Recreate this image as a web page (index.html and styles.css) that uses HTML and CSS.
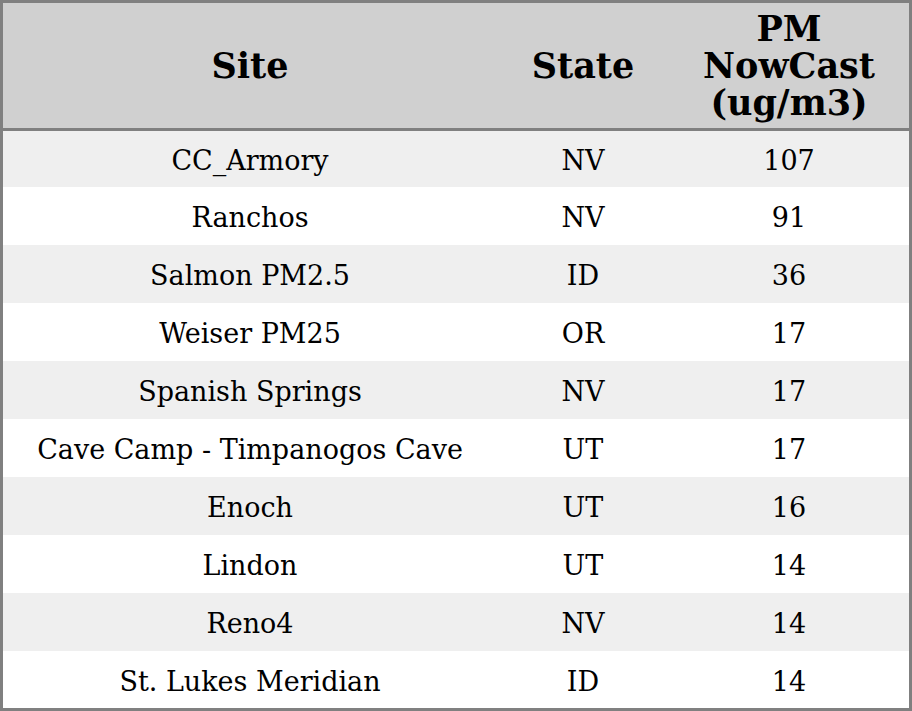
FILE: index.html
```html
<!DOCTYPE html>
<html>
<head>
<meta charset="utf-8">
<link rel="stylesheet" href="styles.css">
</head>
<body>
<table class="data">
  <thead>
    <tr>
      <th class="c-site">Site</th>
      <th class="c-state">State</th>
      <th class="c-pm">PM<br>NowCast<br>(ug/m3)</th>
    </tr>
  </thead>
  <tbody>
    <tr><td>CC_Armory</td><td>NV</td><td>107</td></tr>
    <tr><td>Ranchos</td><td>NV</td><td>91</td></tr>
    <tr><td>Salmon PM2.5</td><td>ID</td><td>36</td></tr>
    <tr><td>Weiser PM25</td><td>OR</td><td>17</td></tr>
    <tr><td>Spanish Springs</td><td>NV</td><td>17</td></tr>
    <tr><td>Cave Camp - Timpanogos Cave</td><td>UT</td><td>17</td></tr>
    <tr><td>Enoch</td><td>UT</td><td>16</td></tr>
    <tr><td>Lindon</td><td>UT</td><td>14</td></tr>
    <tr><td>Reno4</td><td>NV</td><td>14</td></tr>
    <tr><td>St. Lukes Meridian</td><td>ID</td><td>14</td></tr>
  </tbody>
</table>
</body>
</html>
```
FILE: styles.css
```css
html, body {
  margin: 0;
  padding: 0;
  background: #ffffff;
}
.data {
  width: 912px;
  border-collapse: collapse;
  border: 3px solid #808080;
  font-family: "DejaVu Serif", serif;
  color: #000;
  table-layout: fixed;
}
.data th {
  background: #d0d0d0;
  font-size: 35px;
  font-weight: bold;
  line-height: 37px;
  text-align: center;
  height: 125px;
  padding: 0;
  border-bottom: 3px solid #808080;
}
.c-site { width: 494px; }
.c-state { width: 172px; }
.c-pm { width: 240px; }
.data td {
  font-size: 27px;
  line-height: 32px;
  text-align: center;
  padding: 4px 0 0 0;
  height: 54px;
}
.data tbody tr:first-child td {
  height: 52px;
}
.data tbody tr:last-child td {
  height: 53px;
}
.data tbody tr:nth-child(odd) td {
  background: #efefef;
}
```
